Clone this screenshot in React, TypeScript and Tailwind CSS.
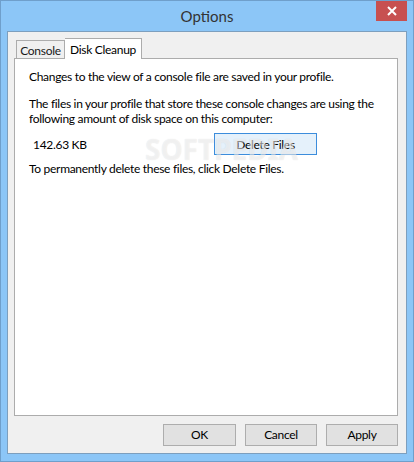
import React from "react";

export default function App() {
  const font = { fontFamily: 'Lato, "Noto Sans", sans-serif' };
  return (
    <div
      className="w-[414px] h-[462px] bg-[#8cc6f7] border border-[#6f9fcb] flex flex-col text-[12px] tracking-[-0.3px] text-[#000]"
      style={font}
    >
      {/* title bar */}
      <div className="h-[30px] flex items-start relative">
        <div className="flex-1 flex justify-center pt-[5px] text-[15px] leading-[20px] tracking-[0px] text-[#333333]">
          Options
        </div>
        <div className="absolute right-[6px] top-0 w-[31px] h-[20px] bg-[#c75050] flex items-center justify-center">
          <svg width="10" height="10" viewBox="0 0 10 10">
            <path d="M1 1 L9 9 M9 1 L1 9" stroke="#fff" strokeWidth="2" />
          </svg>
        </div>
      </div>
      {/* client area */}
      <div className="mx-[6px] mb-[7px] flex-1 border border-[#7d9fbe] bg-[#f0f0f0] flex flex-col pl-[6px] pr-[8px] pt-[6px] pb-[7px]">
        {/* tabs */}
        <div className="flex items-end h-[20px] pl-[2px] relative z-10">
          <div className="w-[49px] h-[18px] border border-b-0 border-[#acacac] bg-[#f0f0f0] flex items-center justify-center leading-[15px] text-[#1a1a1a] pt-[1px]">
            Console
          </div>
          <div className="w-[77px] h-[21px] border border-b-0 border-l-0 border-[#acacac] bg-white flex items-center justify-center leading-[15px] -mb-[1px]">
            Disk Cleanup
          </div>
        </div>
        {/* panel */}
        <div className="w-[384px] h-[358px] border border-[#acacac] bg-white relative pl-[14px] pt-[10px] leading-[15px] whitespace-nowrap">
          <div>Changes to the view of a console file are saved in your profile.</div>
          <div className="mt-[12px]">
            The files in your profile that store these console changes are using the
          </div>
          <div>following amount of disk space on this computer:</div>
          <div className="flex items-center mt-[7px] h-[22px]">
            <div className="w-[185px] pl-[4px]">142.63 KB</div>
            <div className="w-[103px] h-[22px] border border-[#3c8ddc] bg-[#e5f1fb] flex items-center justify-center">
              Delete Files
            </div>
          </div>
          <div className="mt-[6px]">To permanently delete these files, click Delete Files.</div>
          <div
            className="absolute left-[130px] top-[76px] text-[28px] font-bold leading-[28px] tracking-[0px] text-[rgba(255,255,255,0.55)] pointer-events-none"
            style={{ fontFamily: '"Noto Sans", sans-serif', textShadow: "0 0 1px rgba(0,0,0,0.12)" }}
          >
            SOFTPEDIA
          </div>
        </div>
        {/* buttons */}
        <div className="flex-1 flex items-end justify-end gap-[9px]">
          <div className="w-[73px] h-[22px] border border-[#adadad] bg-[#e1e1e1] flex items-center justify-center">OK</div>
          <div className="w-[72px] h-[22px] border border-[#adadad] bg-[#e1e1e1] flex items-center justify-center">Cancel</div>
          <div className="w-[72px] h-[22px] border border-[#adadad] bg-[#e1e1e1] flex items-center justify-center">Apply</div>
        </div>
      </div>
    </div>
  );
}
